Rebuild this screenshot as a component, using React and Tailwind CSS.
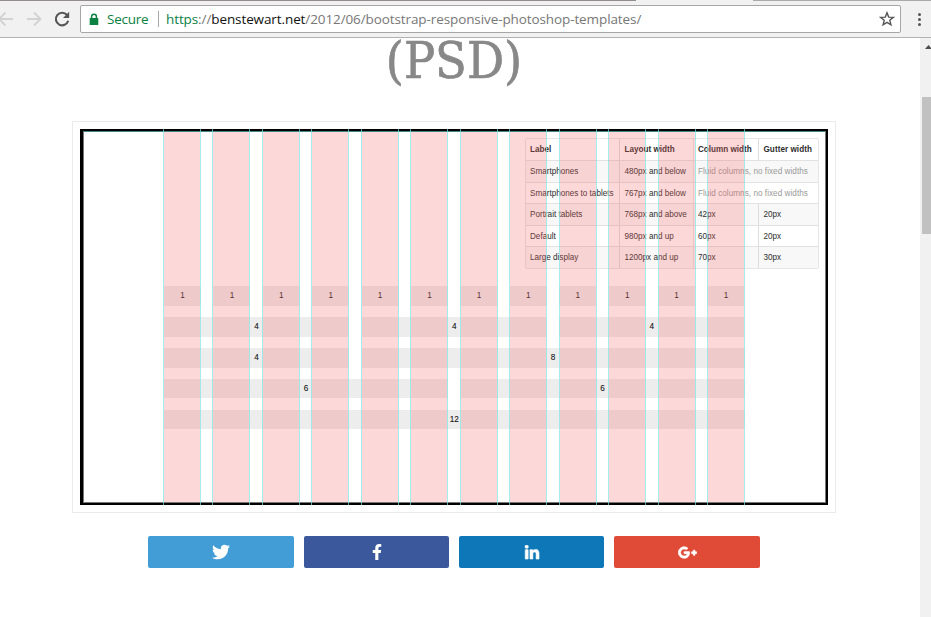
import { FaTwitter, FaFacebookF, FaLinkedinIn, FaGooglePlusG } from "react-icons/fa";

const columns = Array.from({ length: 12 }, (_, i) => i);

function Toolbar() {
  return (
    <header className="h-[38px] shrink-0 bg-[#f1f1f1] border-b border-[#b2b2b2] flex flex-col">
      <div className="flex h-px">
        <div className="w-[636px] bg-[#918c90]" />
        <div className="w-[117px] bg-[#f1f1f1]" />
        <div className="grow bg-[#aaaaaa]" />
      </div>
      <div className="flex pt-1">
        <div className="flex w-20 h-7 items-center">
          <svg width="80" height="28" viewBox="0 0 80 28" fill="none">
            <path d="M-2 14H13M5.500 7.500L-1 14L5.500 20.500" stroke="#d2d2d2" strokeWidth="1.800" />
            <path d="M27 14H40M34 7.500L40.500 14L34 20.500" stroke="#d2d2d2" strokeWidth="1.800" />
            <path d="M67 10A6.300 6.300 0 1 0 68.200 15.800" stroke="#555" strokeWidth="2.100" />
            <path d="M69.200 6.800V13H63Z" fill="#555" />
          </svg>
        </div>
        <div className="flex w-[821px] h-7 items-center rounded-[2px] border border-[#a6a6a6] bg-white font-['Open_Sans','Noto_Sans',sans-serif] text-[13.500px] leading-none whitespace-nowrap">
          <svg className="ml-[8px]" width="10" height="13" viewBox="0 0 10 13">
            <path d="M2.600 6V3.600A2.300 2.300 0 0 1 7.400 3.600V6" fill="none" stroke="#0b8043" strokeWidth="1.500" />
            <rect x="0.700" y="5" width="8.600" height="7" rx="0.600" fill="#0b8043" />
          </svg>
          <span className="ml-[8px] w-[51px] pt-px tracking-[-0.250px] text-[#0b8043]">Secure</span>
          <span className="h-4 w-px bg-[#a6a6a6]" />
          <span className="ml-[7px] grow pt-px tracking-[-0.100px] text-[#777]">
            <span className="text-[#0b8043]">https</span>://<span className="text-[#111]">benstewart.net</span>/2012/06/bootstrap-responsive-photoshop-templates/
          </span>
          <svg className="mr-[5px]" width="16" height="16" viewBox="0 0 16 16">
            <path d="M8 1.800L9.700 6.100L14.300 6.400L10.800 9.300L11.900 13.800L8 11.300L4.100 13.800L5.200 9.300L1.700 6.400L6.300 6.100Z" fill="none" stroke="#555" strokeWidth="1.400" />
          </svg>
        </div>
        <div className="flex h-7 grow flex-col items-center justify-center gap-[2px] pl-[7px]">
          <i className="size-[3px] rounded-full bg-[#555]" />
          <i className="size-[3px] rounded-full bg-[#555]" />
          <i className="size-[3px] rounded-full bg-[#555]" />
        </div>
      </div>
    </header>
  );
}

const sizes = [
  ["Smartphones", "480px and below", null],
  ["Smartphones to tablets", "767px and below", null],
  ["Portrait tablets", "768px and above", "42px", "20px"],
  ["Default", "980px and up", "60px", "20px"],
  ["Large display", "1200px and up", "70px", "30px"],
];

function SizeTable() {
  return (
    <div className="ml-auto mr-[6px] mt-[6px] h-[130.500px] w-[294px] shrink-0 rounded-[2px] border border-[#e6e6e6] text-[8.150px] leading-[21px] whitespace-nowrap text-[#2d2d2d]">
      <div className="grid h-[21px] grid-cols-[93px_74px_64.500px_60.500px] font-bold leading-[22px]">
        <div className="pl-[4px]">Label</div>
        <div className="border-l border-[#ddd] pl-[4.500px]">Layout width</div>
        <div className="border-l border-[#e6e6e6] pl-[4px]">Column width</div>
        <div className="border-l border-[#ddd] pl-[5px] tracking-[0.050px]">Gutter width</div>
      </div>
      {sizes.map(([label, layout, column, gutter]) => (
        <div
          key={label}
          className="grid h-[21.500px] grid-cols-[93px_74px_64.500px_60.500px] border-t border-[#e2e2e2] odd:bg-white even:bg-[#f8f8f8]"
        >
          <div className="pl-[4px]">{label}</div>
          <div className="border-l border-[#ddd] pl-[4.500px]">{layout}</div>
          {column ? (
            <>
              <div className="border-l border-[#e6e6e6] pl-[4px]">{column}</div>
              <div className="border-l border-[#ddd] pl-[5px]">{gutter}</div>
            </>
          ) : (
            <div className="col-span-2 border-l border-[#e6e6e6] pl-[4px] tracking-[0.050px] text-[#999]">Fluid columns, no fixed widths</div>
          )}
        </div>
      ))}
    </div>
  );
}

const spanClass = {
  1: "col-span-1",
  4: "col-span-4 [text-shadow:0_0_0.500px_#2226]",
  6: "col-span-6 [text-shadow:0_0_0.500px_#2226]",
  8: "col-span-8 [text-shadow:0_0_0.500px_#2226]",
  12: "col-span-12 [text-shadow:0_0_0.500px_#2226]",
};
const rows = [Array(12).fill(1), [4, 4, 4], [4, 8], [6, 6], [12]];

function GridTemplate() {
  return (
    <div className="relative h-[376px] border-y-2 border-l-[3px] border-r-2 border-black bg-white font-['Liberation_Sans',Arial,sans-serif]">
      <div className="flex h-[372px] flex-col border border-[#777] border-t-[#438582]">
        <SizeTable />
        <div className="ml-[80px] mt-[17.800px] flex w-[580.500px] flex-col gap-[12.400px]">
          {rows.map((row, r) => (
            <div key={r} className="grid h-[18.500px] grid-cols-12 gap-x-[12.400px] text-center text-[8.200px] leading-[19.500px] text-[#222]">
              {row.map((n, i) => (
                <div key={i} className={`${spanClass[n]} bg-[#ededed]`}>{n}</div>
              ))}
            </div>
          ))}
        </div>
      </div>
      <div className="absolute -top-[2px] left-[80px] grid h-[376px] w-[582px] grid-cols-12 gap-x-[11.450px]">
        {columns.map((c) => (
          <div key={c} className="border-x border-[#7fe6e4]/70 py-[3px]">
            <div className="h-full bg-[#f86464]/25" />
          </div>
        ))}
      </div>
    </div>
  );
}

function Share() {
  const box = "flex h-8 items-center justify-center rounded-[2px] text-white";
  return (
    <div className="ml-[148px] mt-[23px] flex gap-[10px]">
      <a className={`${box} w-[146px] bg-[#429cd6]`}><FaTwitter size={18} /></a>
      <a className={`${box} w-[145px] bg-[#3a589b]`}><FaFacebookF size={16} /></a>
      <a className={`${box} w-[145px] bg-[#0e77b7] pt-px`}><FaLinkedinIn size={16} stroke="currentColor" strokeWidth="20" /></a>
      <a className={`${box} w-[146px] bg-[#df4b37]`}><FaGooglePlusG size={19} stroke="currentColor" strokeWidth="26" /></a>
    </div>
  );
}

export default function App() {
  return (
    <div className="flex h-[617px] w-[931px] flex-col overflow-hidden bg-white">
      <Toolbar />
      <div className="flex grow">
        <main className="w-[920px]">
          <div className="h-[83px] w-[908px] overflow-hidden text-center">
            <h1 className="-mt-[7px] origin-center scale-x-[0.91] font-['DejaVu_Serif',serif] text-[51px] leading-[60px] text-[#888] [-webkit-text-stroke:0.700px_#888]">(PSD)</h1>
          </div>
          <div className="ml-[72px] h-[392px] w-[764px] border border-[#eaeaea] p-[7px]">
            <GridTemplate />
          </div>
          <Share />
        </main>
        <aside className="flex w-[11px] flex-col overflow-hidden bg-[#f1f1f1] pl-[2px]">
          <svg className="ml-[3px] mt-[7px] shrink-0" width="7" height="4" viewBox="0 0 7 4">
            <path d="M0 4L3.500 0L7 4Z" fill="#505050" />
          </svg>
          <div className="mt-[48px] h-[137px] w-[15px] bg-[#c1c1c1]" />
        </aside>
      </div>
    </div>
  );
}
